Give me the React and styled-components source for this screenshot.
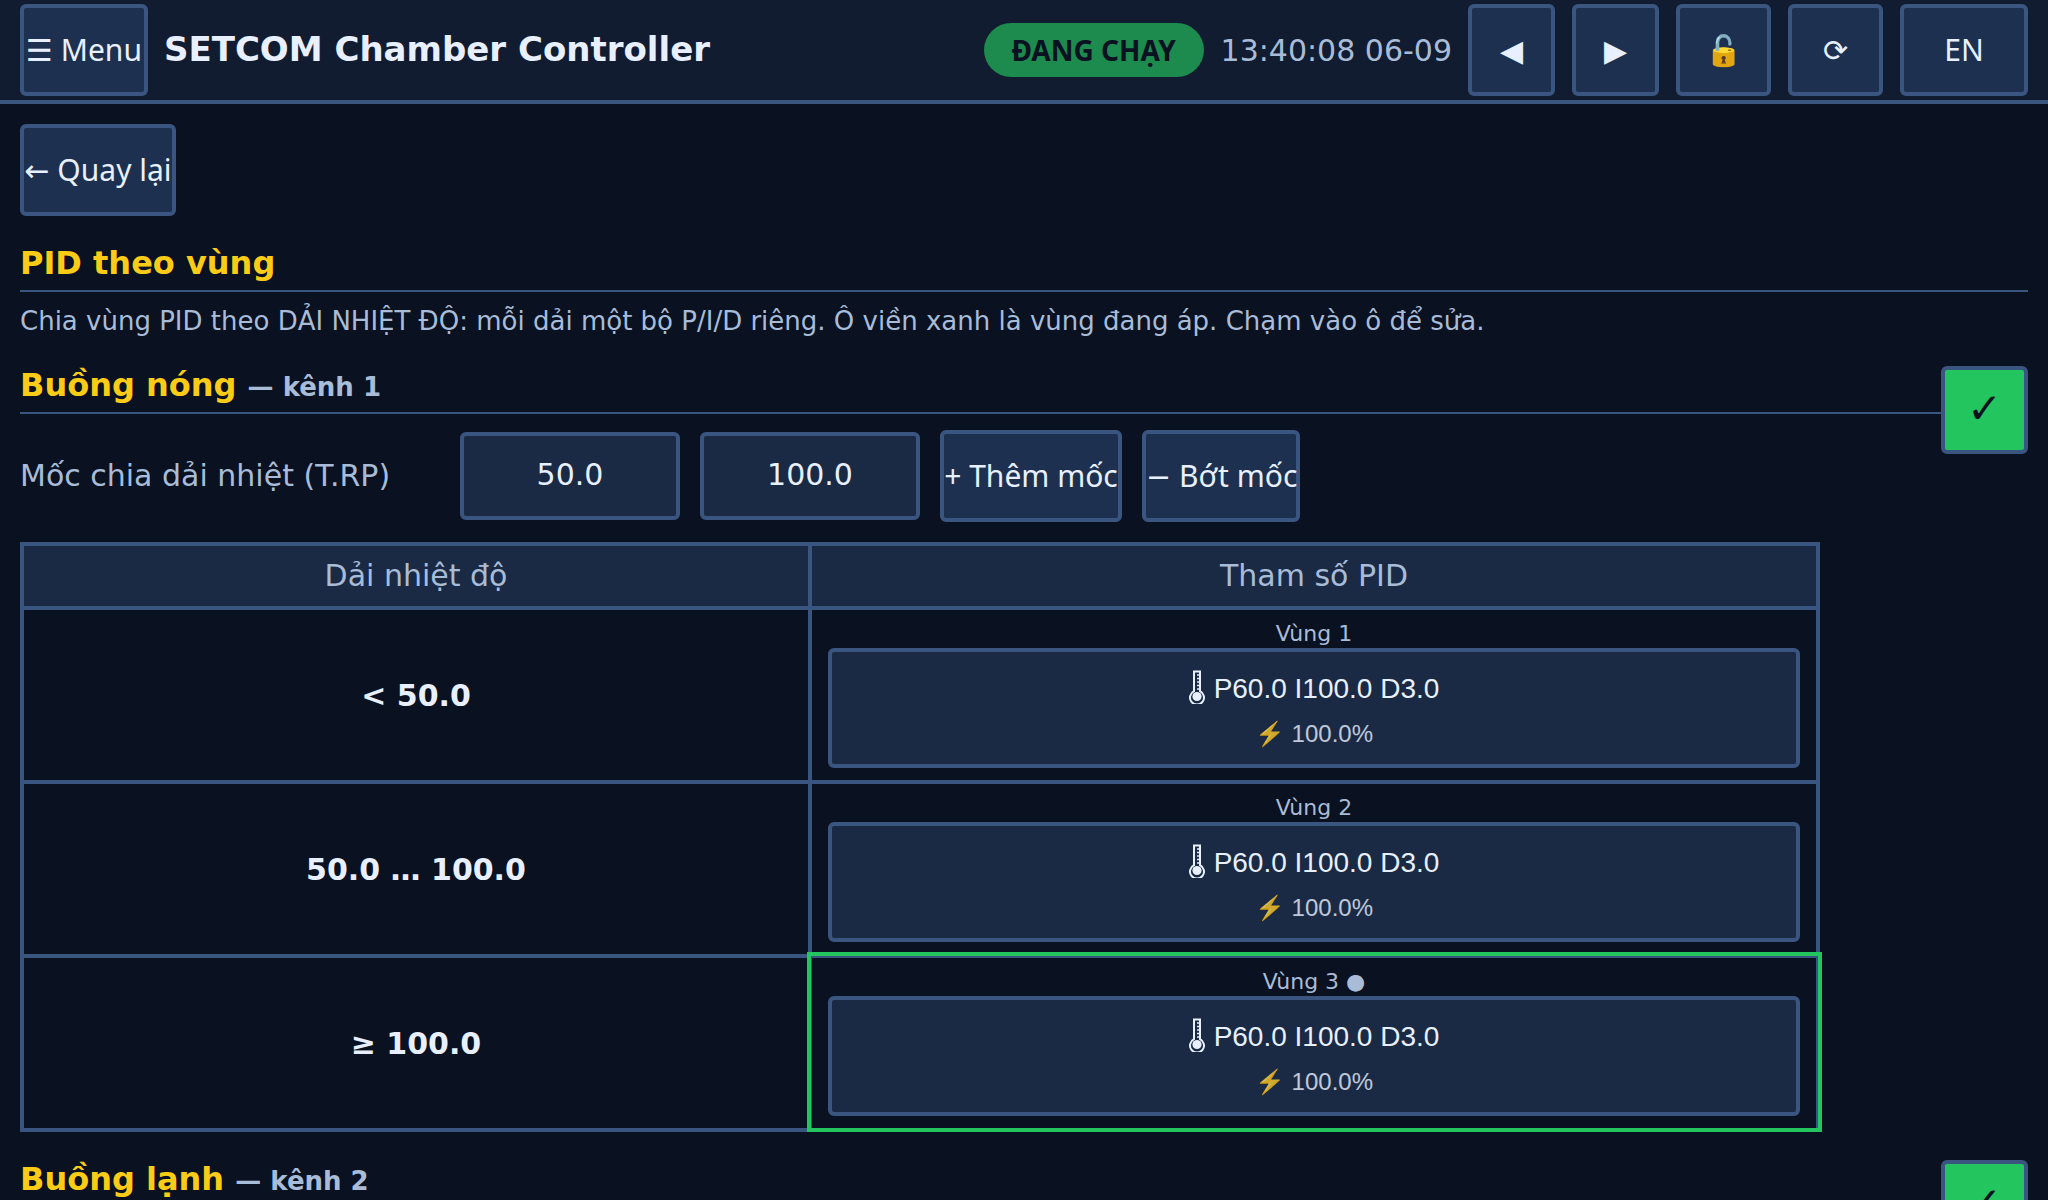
import React from 'react';
import styled, { createGlobalStyle } from 'styled-components';

const ZONES = [
  { id: 1, range: '< 50.0', active: false },
  { id: 2, range: '50.0 … 100.0', active: false },
  { id: 3, range: '≥ 100.0', active: true },
];

const ThermoIcon = () => (
  <ThermoSvg width="16" height="34" viewBox="0 0 16 34" fill="none">
    <path d="M5 1.5h6v19.7a7 7 0 1 1-6 0z" stroke="#e8f0ff" strokeWidth="2" />
    <circle cx="8" cy="26.5" r="4.6" fill="#e8f0ff" />
    <path d="M8 5h3M8 8.5h3M8 12h3M8 15.5h3M8 19h3" stroke="#e8f0ff" strokeWidth="1.5" />
  </ThermoSvg>
);

function App() {
  return (
    <>
      <GlobalStyle />
      <Screen>
        <Header>
          <NavButton $w={128}>☰ Menu</NavButton>
          <Title>SETCOM Chamber Controller</Title>
          <StatusPill>ĐANG CHẠY</StatusPill>
          <Clock>13:40:08 06-09</Clock>
          <HeaderActions>
            <NavButton $w={87}>◀</NavButton>
            <NavButton $w={87}>▶</NavButton>
            <NavButton $w={95}>🔓</NavButton>
            <NavButton $w={95}>⟳</NavButton>
            <NavButton $w={128}>EN</NavButton>
          </HeaderActions>
        </Header>

        <Main>
          <BackButton>← Quay lại</BackButton>
          <PageTitle>PID theo vùng</PageTitle>
          <Description>
            Chia vùng PID theo DẢI NHIỆT ĐỘ: mỗi dải một bộ P/I/D riêng. Ô viền xanh là vùng đang áp. Chạm vào ô để sửa.
          </Description>

          <SectionHead $top={26}>
            <SectionTitle>
              Buồng nóng <small>— kênh 1</small>
            </SectionTitle>
            <ApplyButton>✓</ApplyButton>
          </SectionHead>

          <SplitRow>
            <SplitLabel>Mốc chia dải nhiệt (T.RP)</SplitLabel>
            <SplitValue>50.0</SplitValue>
            <SplitValue>100.0</SplitValue>
            <SplitButton $w={182}>+ Thêm mốc</SplitButton>
            <SplitButton $w={158}><MinusGlyph>−</MinusGlyph> Bớt mốc</SplitButton>
          </SplitRow>

          <ZoneTable>
            <thead>
              <tr>
                <HeadCell $w={788}>Dải nhiệt độ</HeadCell>
                <HeadCell>Tham số PID</HeadCell>
              </tr>
            </thead>
            <tbody>
              {ZONES.map(zone => (
                <tr key={zone.id}>
                  <RangeCell>{zone.range}</RangeCell>
                  <ZoneCell $active={zone.active}>
                    <ZoneName>Vùng {zone.id}{zone.active ? ' ●' : ''}</ZoneName>
                    <ZoneButton>
                      <PidLine>
                        <ThermoIcon />
                        P60.0 I100.0 D3.0
                      </PidLine>
                      <PowerLine>⚡ 100.0%</PowerLine>
                    </ZoneButton>
                  </ZoneCell>
                </tr>
              ))}
            </tbody>
          </ZoneTable>

          <SectionHead $top={24}>
            <SectionTitle>
              Buồng lạnh <small>— kênh 2</small>
            </SectionTitle>
            <ApplyButton>✓</ApplyButton>
          </SectionHead>
        </Main>
      </Screen>
    </>
  );
}

const GlobalStyle = createGlobalStyle`
  html, body {
    margin: 0;
    padding: 0;
    background: #0a1120;
  }
  * {
    box-sizing: border-box;
  }
`;

const Screen = styled.div`
  height: 100vh;
  overflow: hidden;
  background: #0a1120;
  color: #e8f0ff;
  font-family: 'DejaVu Sans', sans-serif;
`;

const Header = styled.header`
  display: flex;
  align-items: center;
  height: 104px;
  padding: 0 20px;
  background: #111c30;
  border-bottom: 4px solid #3a5580;
`;

const NavButton = styled.button`
  width: ${({ $w }) => $w}px;
  height: 92px;
  padding: 0 0 2px;
  flex: none;
  background: #1e3050;
  border: 4px solid #3a5580;
  border-radius: 6px;
  color: #e8f0ff;
  font-family: 'Noto Sans', 'DejaVu Sans', sans-serif;
  font-size: 30px;
  white-space: nowrap;
`;

const Title = styled.h1`
  margin: 0 0 2px 16px;
  flex: 1;
  font-size: 34px;
  font-weight: 700;
`;

const StatusPill = styled.div`
  display: flex;
  align-items: center;
  justify-content: center;
  width: 220px;
  height: 54px;
  border-radius: 27px;
  background: #1d8a4e;
  color: #0a1120;
  font-family: 'Noto Sans', 'DejaVu Sans', sans-serif;
  font-size: 28px;
  font-weight: 700;
`;

const Clock = styled.div`
  margin: 0 16px 0 17px;
  color: #a8bcd8;
  font-size: 30px;
  white-space: nowrap;
`;

const HeaderActions = styled.div`
  display: flex;
  gap: 17px;
`;

const Main = styled.main`
  padding: 20px 20px 0;
`;

const BackButton = styled.button`
  display: block;
  width: 156px;
  height: 92px;
  padding: 0 0 2px;
  background: #1e3050;
  border: 4px solid #3a5580;
  border-radius: 6px;
  color: #e8f0ff;
  font-family: 'Noto Sans', 'DejaVu Sans', sans-serif;
  font-size: 30px;
  white-space: nowrap;
`;

const PageTitle = styled.h2`
  margin: 28px 0 0;
  padding-bottom: 8px;
  border-bottom: 2px solid #3a5580;
  color: #facc15;
  font-size: 32px;
  font-weight: 700;
`;

const Description = styled.p`
  margin: 14px 0 0;
  color: #a8bcd8;
  font-size: 26px;
`;

const SectionHead = styled.div`
  display: flex;
  align-items: flex-start;
  height: 50px;
  margin-top: ${({ $top }) => $top}px;
`;

const SectionTitle = styled.h3`
  flex: 1;
  margin: 0;
  padding: 4px 0 8px;
  border-bottom: 2px solid #3a5580;
  color: #facc15;
  font-size: 32px;
  font-weight: 700;

  small {
    color: #a8bcd8;
    font-size: 26px;
  }
`;

const ApplyButton = styled.button`
  width: 87px;
  height: 88px;
  margin-top: 4px;
  padding: 0 0 3px;
  flex: none;
  background: #22c55e;
  border: 4px solid #3a5580;
  border-radius: 6px;
  color: #0a1120;
  font-family: 'DejaVu Sans', sans-serif;
  font-size: 42px;
`;

const SplitRow = styled.div`
  display: flex;
  align-items: center;
  gap: 20px;
  margin-top: 18px;
`;

const SplitLabel = styled.div`
  width: 420px;
  padding-bottom: 2px;
  color: #a8bcd8;
  font-size: 30px;
`;

const SplitValue = styled.div`
  display: flex;
  align-items: center;
  justify-content: center;
  width: 220px;
  height: 88px;
  padding-bottom: 3px;
  background: #1a2a44;
  border: 4px solid #3a5580;
  border-radius: 6px;
  font-size: 30px;
`;

const SplitButton = styled.button`
  width: ${({ $w }) => $w}px;
  height: 92px;
  padding: 0 0 2px;
  background: #1e3050;
  border: 4px solid #3a5580;
  border-radius: 6px;
  color: #e8f0ff;
  font-family: 'Noto Sans', 'DejaVu Sans', sans-serif;
  font-size: 30px;
  white-space: nowrap;
`;

const MinusGlyph = styled.span`
  font-family: 'DejaVu Sans', sans-serif;
`;

const ZoneTable = styled.table`
  width: 1800px;
  margin-top: 20px;
  border-collapse: collapse;
  table-layout: fixed;
  border: 4px solid #3a5580;
`;

const HeadCell = styled.th`
  width: ${({ $w }) => ($w ? `${$w}px` : 'auto')};
  height: 64px;
  padding: 0 0 2px;
  background: #1a2a44;
  border: 4px solid #3a5580;
  color: #a8bcd8;
  font-size: 30px;
  font-weight: 400;
`;

const RangeCell = styled.td`
  height: 174px;
  border: 4px solid #3a5580;
  text-align: center;
  font-size: 30px;
  font-weight: 700;
`;

const ZoneCell = styled.td`
  position: relative;
  padding: 10px 16px 12px;
  border: 4px solid #3a5580;
  text-align: center;

  ${({ $active }) =>
    $active &&
    `
    &::after {
      content: '';
      position: absolute;
      inset: -6px -6px -4px -5px;
      border: 4px solid #22c55e;
    }
  `}
`;

const ZoneName = styled.div`
  height: 28px;
  padding-top: 1px;
  color: #a8bcd8;
  font-size: 22px;
`;

const ZoneButton = styled.button`
  display: block;
  width: 100%;
  height: 120px;
  padding: 3px 0 0;
  background: #1a2a44;
  border: 4px solid #3a5580;
  border-radius: 6px;
  font-family: 'Liberation Sans', sans-serif;
  color: #e8f0ff;
`;

const PidLine = styled.div`
  display: flex;
  align-items: center;
  justify-content: center;
  gap: 9px;
  height: 34px;
  margin-bottom: 14px;
  font-size: 28px;
`;

const ThermoSvg = styled.svg`
  flex: none;
  margin-top: -3px;
`;

const PowerLine = styled.div`
  color: #e8f0ff;
  opacity: 0.8;
  font-size: 24px;
`;

export default App;
